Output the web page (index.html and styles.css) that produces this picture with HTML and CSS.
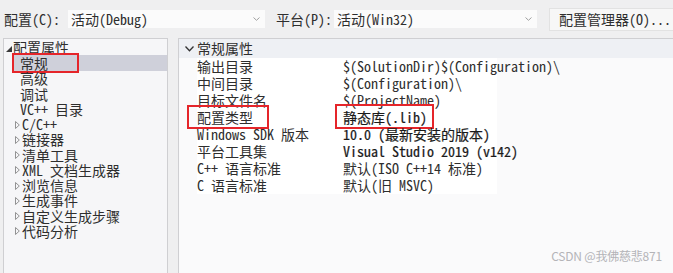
FILE: index.html
```html
<!DOCTYPE html>
<html>
<head>
<meta charset="utf-8">
<link rel="stylesheet" href="styles.css">
</head>
<body>
<div class="topbar">
  <span class="label">配置(C):</span>
  <div class="combo combo-cfg"><span>活动(Debug)</span><svg class="chev" width="7" height="4" viewBox="0 0 7 4"><path d="M0.5 0.5 L3.5 3.3 L6.5 0.5" fill="none" stroke="#a0a0a0" stroke-width="1"/></svg></div>
  <span class="label label-plat">平台(P):</span>
  <div class="combo combo-plat"><span>活动(Win32)</span><svg class="chev" width="7" height="4" viewBox="0 0 7 4"><path d="M0.5 0.5 L3.5 3.3 L6.5 0.5" fill="none" stroke="#a0a0a0" stroke-width="1"/></svg></div>
  <div class="btn">配置管理器(O)...</div>
</div>
<div class="main">
  <div class="tree">
    <div class="node root"><svg class="exp" width="6" height="6" viewBox="0 0 6 6"><path d="M6 0 L6 6 L0 6 Z" fill="#3a3a3a"/></svg><span>配置属性</span></div>
    <div class="node leaf sel"><span class="txt">常规</span><span class="redbox rb-tree"></span></div>
    <div class="node leaf">高级</div>
    <div class="node leaf">调试</div>
    <div class="node leaf">VC++ 目录</div>
    <div class="node sub"><svg class="exp" width="5" height="8" viewBox="0 0 5 8"><path d="M0.5 0.5 L4.3 4 L0.5 7.5 Z" fill="none" stroke="#888" stroke-width="0.9"/></svg><span>C/C++</span></div>
    <div class="node sub"><svg class="exp" width="5" height="8" viewBox="0 0 5 8"><path d="M0.5 0.5 L4.3 4 L0.5 7.5 Z" fill="none" stroke="#888" stroke-width="0.9"/></svg><span>链接器</span></div>
    <div class="node sub"><svg class="exp" width="5" height="8" viewBox="0 0 5 8"><path d="M0.5 0.5 L4.3 4 L0.5 7.5 Z" fill="none" stroke="#888" stroke-width="0.9"/></svg><span>清单工具</span></div>
    <div class="node sub"><svg class="exp" width="5" height="8" viewBox="0 0 5 8"><path d="M0.5 0.5 L4.3 4 L0.5 7.5 Z" fill="none" stroke="#888" stroke-width="0.9"/></svg><span>XML 文档生成器</span></div>
    <div class="node sub"><svg class="exp" width="5" height="8" viewBox="0 0 5 8"><path d="M0.5 0.5 L4.3 4 L0.5 7.5 Z" fill="none" stroke="#888" stroke-width="0.9"/></svg><span>浏览信息</span></div>
    <div class="node sub"><svg class="exp" width="5" height="8" viewBox="0 0 5 8"><path d="M0.5 0.5 L4.3 4 L0.5 7.5 Z" fill="none" stroke="#888" stroke-width="0.9"/></svg><span>生成事件</span></div>
    <div class="node sub"><svg class="exp" width="5" height="8" viewBox="0 0 5 8"><path d="M0.5 0.5 L4.3 4 L0.5 7.5 Z" fill="none" stroke="#888" stroke-width="0.9"/></svg><span>自定义生成步骤</span></div>
    <div class="node sub"><svg class="exp" width="5" height="8" viewBox="0 0 5 8"><path d="M0.5 0.5 L4.3 4 L0.5 7.5 Z" fill="none" stroke="#888" stroke-width="0.9"/></svg><span>代码分析</span></div>
  </div>
  <div class="props">
    <div class="phead"><span class="pchev"><svg width="9" height="6" viewBox="0 0 9 6"><path d="M0.5 0.5 L4.5 4.8 L8.5 0.5" fill="none" stroke="#333" stroke-width="1.3"/></svg></span>常规属性</div>
    <div class="grid">
      <div class="pn">输出目录</div><div class="pv">$(SolutionDir)$(Configuration)\</div>
      <div class="pn">中间目录</div><div class="pv">$(Configuration)\</div>
      <div class="pn">目标文件名</div><div class="pv">$(ProjectName)</div>
      <div class="pn boxed"><span class="redbox rb-name"></span>配置类型</div><div class="pv b boxed"><span class="redbox rb-val"></span>静态库(.lib)</div>
      <div class="pn">Windows SDK 版本</div><div class="pv b">10.0 (最新安装的版本)</div>
      <div class="pn">平台工具集</div><div class="pv b">Visual Studio 2019 (v142)</div>
      <div class="pn">C++ 语言标准</div><div class="pv">默认(ISO C++14 标准)</div>
      <div class="pn">C 语言标准</div><div class="pv">默认(旧 MSVC)</div>
    </div>
    <div class="watermark">CSDN @我佛慈悲871</div>
  </div>
</div>
</body>
</html>
```
FILE: styles.css
```css
html, body {
  margin: 0;
  padding: 0;
}
body {
  width: 673px;
  height: 273px;
  overflow: hidden;
  background: #efeff0;
  font-family: "Noto Sans Mono CJK SC", "Noto Sans CJK SC", "Liberation Mono", monospace;
  font-size: 14px;
  color: #2e2e2e;
}
.topbar {
  height: 38px;
  display: flex;
  align-items: center;
  padding-left: 4px;
  box-sizing: border-box;
}
.label {
  line-height: 17px;
}
.label-plat {
  margin-left: 11px;
}
.combo {
  height: 18px;
  background: #fbfbfb;
  display: flex;
  align-items: center;
  justify-content: space-between;
  padding: 0 5px 0 3px;
  box-sizing: border-box;
  line-height: 18px;
}
.combo-cfg {
  width: 197px;
  margin-left: 8px;
}
.combo-plat {
  width: 203px;
  margin-left: 2px;
}
.chev {
  display: block;
}
.btn {
  margin-left: 12px;
  height: 23px;
  flex: 1;
  background: #f7f7f7;
  border: 1px solid #e2e2e2;
  border-right: none;
  box-sizing: border-box;
  padding-left: 9px;
  line-height: 21px;
}
.main {
  display: flex;
  height: 235px;
}
.tree {
  margin-left: 3px;
  width: 165px;
  border: 1px solid #cfcfd2;
  border-bottom: none;
  background: #f6f6f8;
  box-sizing: border-box;
  padding-top: 1px;
}
.node {
  height: 15.25px;
  line-height: 15.25px;
  white-space: nowrap;
  position: relative;
  display: flex;
  align-items: center;
}
.root {
  padding-left: 2px;
}
.root .exp {
  margin-right: 1px;
  margin-top: 3px;
}
.leaf {
  padding-left: 16px;
}
.sel {
  margin-left: 9px;
  padding-left: 7px;
  background: #cfd0da;
  height: 16px;
}
.sub {
  padding-left: 11px;
}
.sub .exp {
  margin-right: 2px;
}
.redbox {
  position: absolute;
  border: 2px solid #e5252a;
  box-sizing: border-box;
  pointer-events: none;
}
.rb-tree {
  left: -1px;
  top: -2px;
  width: 67px;
  height: 20px;
}
.props {
  margin-left: 10px;
  flex: 1;
  border-left: 1px solid #cfcfd2;
  border-top: 1px solid #cfcfd2;
  background: #fafafb;
  position: relative;
}
.phead {
  height: 19px;
  line-height: 19px;
  background: #eef0f4;
  display: flex;
  align-items: center;
}
.pchev {
  width: 18px;
  display: flex;
  justify-content: center;
  padding-left: 2px;
  box-sizing: border-box;
}
.grid {
  display: grid;
  grid-template-columns: 146px 1fr;
  grid-auto-rows: 17px;
  margin-left: 18px;
  line-height: 17px;
  width: 300px;
  background: #ffffff;
}
.pn, .pv {
  white-space: nowrap;
  position: relative;
}
.b {
  color: #1a1a1a;
  -webkit-text-stroke: 0.2px #1a1a1a;
}
.rb-name {
  left: -10px;
  top: -4px;
  width: 82px;
  height: 24px;
}
.rb-val {
  left: -8px;
  top: -5px;
  width: 99px;
  height: 25px;
}
.watermark {
  position: absolute;
  right: 11px;
  bottom: 9px;
  font-family: "Noto Sans CJK SC", "Noto Sans", sans-serif;
  font-size: 12px;
  color: #b4b4b8;
  letter-spacing: -0.2px;
}
```
